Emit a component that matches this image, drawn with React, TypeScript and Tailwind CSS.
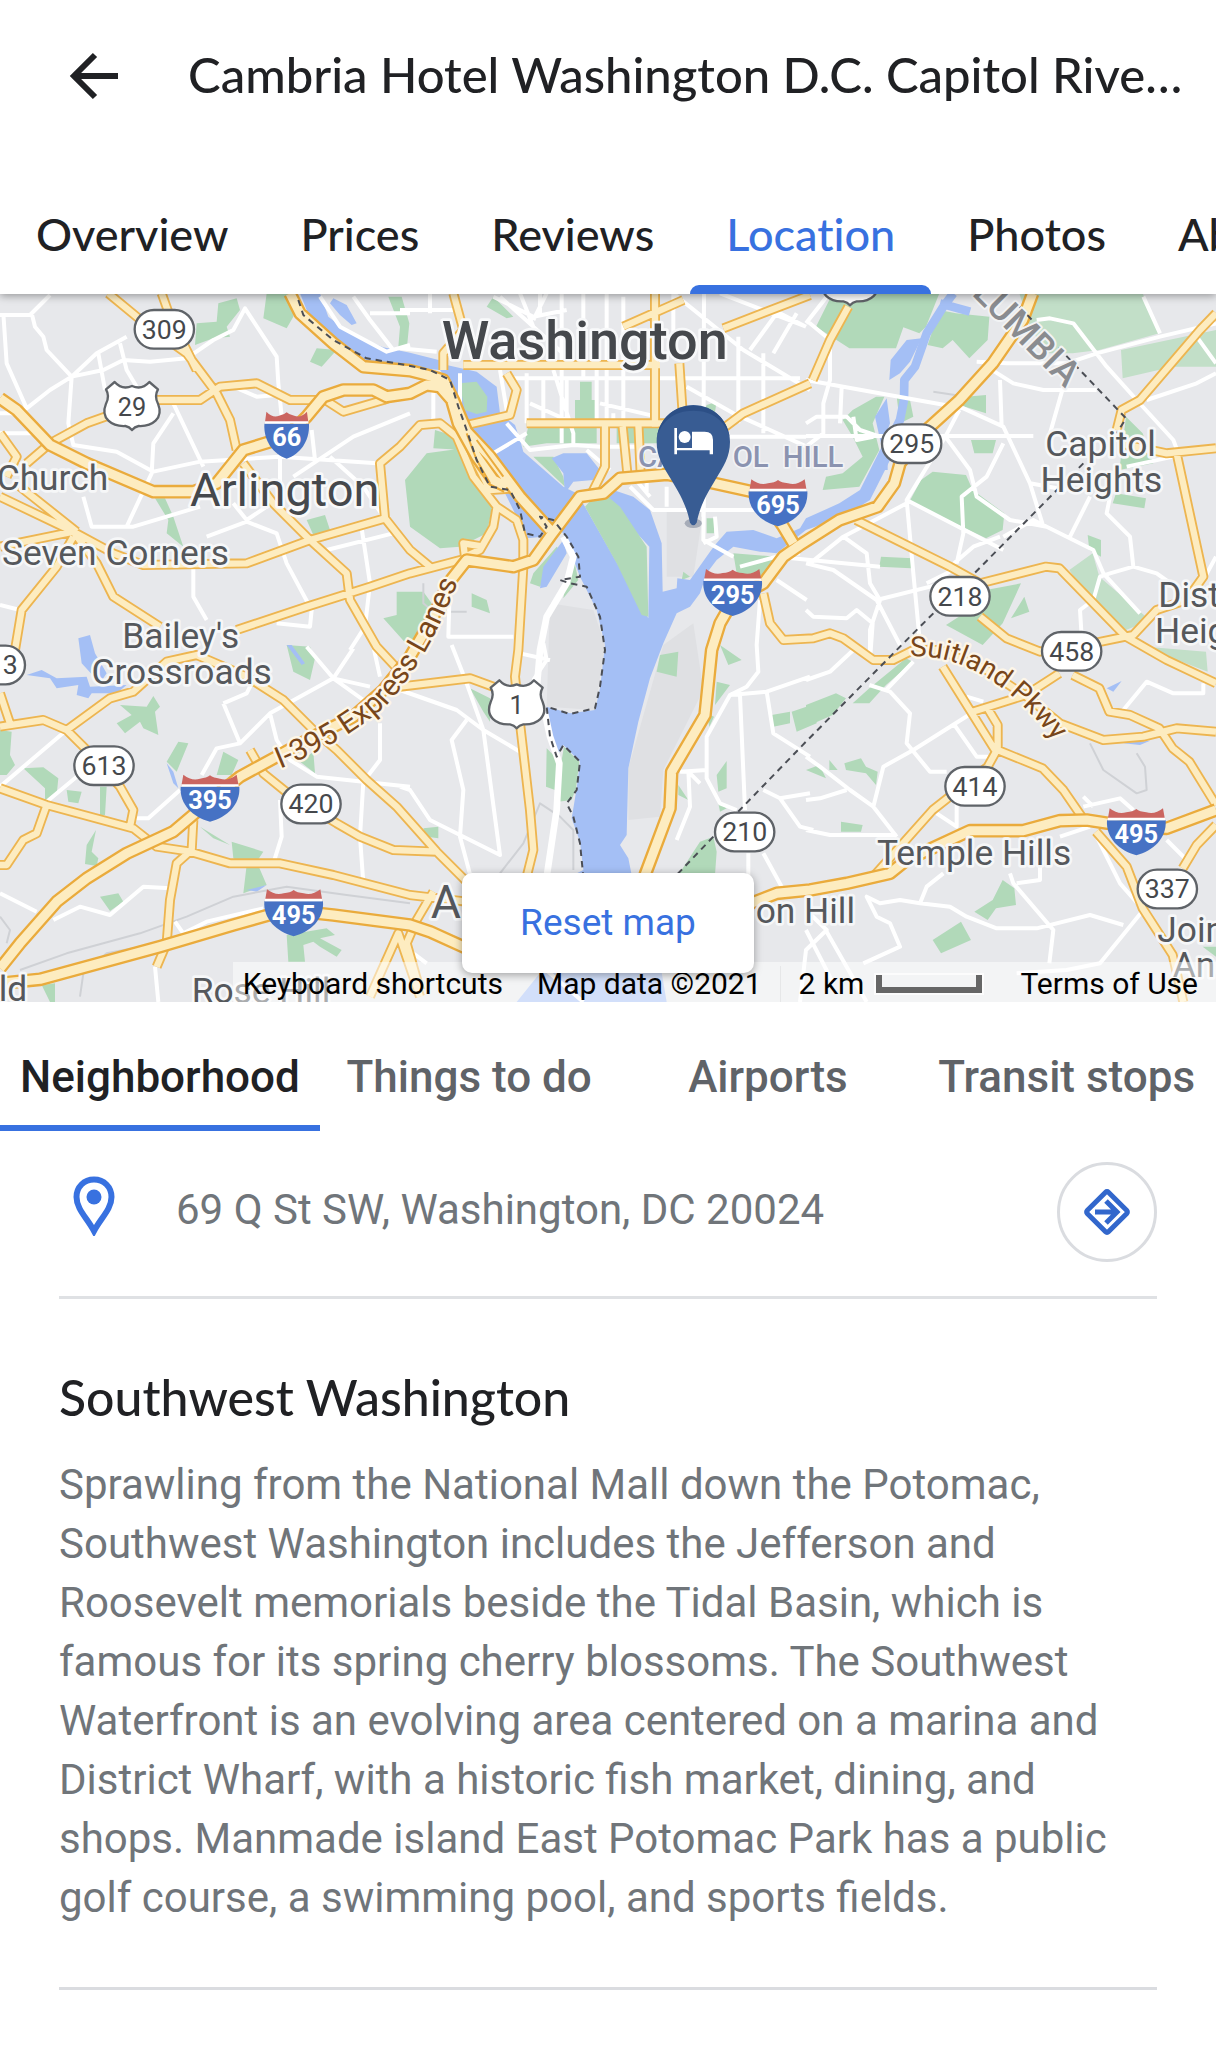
import React from "react";

const PARKS =
  "M1215,570 L1280,490 L1390,475 L1415,560 L1480,640 L1460,730 L1380,770 L1320,775 L1230,710Z " +
  "M1305,420 L1370,440 L1390,480 L1300,475Z M1585,410 H1790 V460 H1640 L1570,470Z M1850,410 H1980 V460 H1850Z " +
  "M1740,275 H1775 V330 H1788 V390 H1725 V330 H1740Z M1600,500 L1660,500 L1690,560 L1695,590Z M1165,20 H1205 L1228,100 L1220,180 L1195,170 L1200,110Z " +
  "M1460,50 L1480,20 L1540,80 L1520,85Z M590,100 L650,95 L655,40 L710,25 L720,60 L680,110 L690,140 L640,145 L585,165Z " +
  "M800,10 H880 V80 L860,115 L790,85Z M930,215 L950,175 L1010,180 L965,230Z M465,625 H495 L520,680 L550,770 L500,730 L505,690Z " +
  "M920,690 L975,675 L990,720 L940,735Z M1190,905 H1270 L1295,940 L1240,1085 L1150,985 L1190,975Z M1415,910 L1460,930 L1470,970 L1415,950Z " +
  "M1600,850 L1670,770 L1680,780 L1640,860 L1620,890 L1590,880Z M2498,10 H2818 L2778,110 L2758,130 L2710,112 L2688,175 H2548 L2448,110Z " +
  "M2818,60 L2868,70 L2968,80 L2963,150 L2908,205 L2858,150 L2828,175 L2783,165Z " +
  "M2558,360 L2628,320 L2653,320 L2618,400 L2638,480 L2578,590 L2468,600 L2478,560 L2528,550 L2588,500 L2558,440 L2528,390Z " +
  "M2690,320 L2730,330 L2740,380 L2700,400Z M2898,320 L2958,315 V370 L2878,345Z M2913,450 H2988 L2978,490 H2923Z " +
  "M2798,545 L2898,555 L2918,600 L3013,670 L3008,720 L2958,745 L2728,635 L2763,570Z M3378,380 L3428,430 L3460,520 L3358,540Z " +
  "M3348,610 L3438,625 L3433,655 L3338,640Z M2643,800 L2738,805 L2733,835 L2638,830Z M3263,735 L3303,750 V800 L3268,780Z " +
  "M2958,900 L3063,880 L3008,1000 L2948,1065 L2838,1005 L2908,960Z M3033,985 L3073,920 L3088,965Z " +
  "M2120,345 L2150,335 L2145,365 L2110,370Z M2120,685 H2142 V730 H2120Z M2200,790 L2330,800 L2290,860 L2210,850Z M2045,870 L2050,845 L2070,860Z " +
  "M0,1320 L35,1325 L30,1395 L45,1425 L20,1455 H0Z M70,1435 L130,1432 L175,1465 L170,1515 L135,1535 V1495Z " +
  "M200,1500 L245,1505 L235,1540 L205,1535Z M300,1490 H320 L315,1575 H300Z " +
  "M360,1245 L440,1250 L460,1218 L480,1250 L465,1265 L475,1335 L430,1315 L420,1295 L375,1330 L350,1300 L395,1275Z " +
  "M500,1415 L535,1355 L565,1360 L530,1445Z M650,1455 L670,1385 L715,1410 L695,1455Z M260,1665 L288,1620 L275,1685 L295,1705 L290,1728 L255,1722Z " +
  "M600,1610 L690,1665 L640,1645Z M695,1655 L790,1685 L770,1715 L800,1785 L730,1810 L740,1725 L700,1705Z M300,1820 L355,1810 L370,1835 L330,1863Z " +
  "M860,1935 L980,1915 L1005,1935 L960,1945 L1025,1980 L1010,2000 L960,1970 L940,1955 L910,1965 L915,2015 H865Z M125,2085 L165,2080 V2136 H150Z " +
  "M860,1065 L930,1070 L945,1105 L930,1170 L880,1145Z M900,1415 L940,1385 L945,1450Z " +
  "M1410,1195 L1470,1225 V1295 L1450,1265Z M1270,1615 L1315,1610 V1645 L1280,1640Z M1640,1375 L1680,1415 L1665,1500 L1638,1490Z " +
  "M1980,1095 L2035,1085 L2030,1160 L1970,1145Z M2160,1065 L2225,1110 L2185,1125Z M2150,1175 L2190,1185 L2145,1245Z M2150,1455 L2180,1413 V1495 L2155,1505Z " +
  "M2155,1540 L2180,1555 L2160,1565Z M2035,1755 L2100,1655 L2140,1640 L2150,1685 L2145,1755Z M2315,1275 L2370,1265 V1300 L2320,1310Z " +
  "M2375,1265 L2450,1240 V1300 L2390,1325Z M2035,1485 L2065,1530 L2035,1515Z M2120,1270 L2142,1280 L2128,1310Z " +
  "M2418,1245 L2508,1210 L2538,1225 L2498,1275 L2418,1310Z M2558,1240 L2608,1195 L2718,1105 L2738,1115 L2658,1185 L2608,1240Z " +
  "M2418,1440 L2458,1425 L2478,1465Z M2488,1410 L2513,1440 H2488Z M2533,1420 L2583,1405 L2598,1430 L2633,1445 L2628,1485 L2598,1450 L2538,1440Z " +
  "M2523,1595 L2588,1605 L2583,1625 H2523Z M2923,1865 L2978,1830 L3008,1770 L3043,1795 L3048,1845 L2988,1855 L2963,1890Z " +
  "M2798,1950 L2883,1895 L2913,1950 L2823,1990Z M3608,1970 H3648 V2000Z";
const PALE_PARKS =
  "M3058,10 H3428 L3478,130 L3298,180 L3218,190 L3138,190 L3090,110Z M3363,180 L3648,120 V230 H3518 L3368,265Z " +
  "M3208,840 L3278,790 L3298,860 L3438,980 L3428,1000 L3378,1020 L3268,930Z M3438,1070 L3618,1085 L3623,1145 L3518,1105Z";
const WATER =
  "M900,10 L960,10 L985,80 L1050,130 L1150,172 L1230,188 L1325,212 L1340,225 L1430,245 L1490,290 L1500,370 L1545,405 L1560,450 L1570,485 L1690,590 L1730,610 L1755,650 L1945,985 L1948,770 L1800,610 L1840,600 L1900,620 L1950,660 L1985,760 L1988,905 L2030,895 L2032,865 L2070,870 L2130,785 L2145,765 L2180,725 L2260,720 L2330,745 L2400,715 L2418,685 L2518,640 L2580,600 L2640,480 L2675,500 L2610,630 L2530,680 L2418,720 L2330,790 L2280,785 L2200,770 L2150,810 L2120,850 L2100,910 L2070,950 L2030,970 L1990,1060 L1950,1165 L1915,1295 L1885,1435 L1880,1635 L1860,1665 L1885,1705 L1895,1755 L1960,1900 L2000,2136 H1550 L1740,1900 L1720,1755 L1750,1740 L1740,1655 L1715,1585 L1730,1495 L1740,1415 L1690,1365 L1670,1400 L1645,1335 L1640,1250 L1710,1270 L1785,1260 L1800,1195 L1815,1065 L1790,960 L1740,860 L1690,730 L1640,690 L1630,740 L1580,745 L1560,700 L1500,580 L1430,430 L1380,380 L1355,290 L1320,240 L1230,232 L1080,208 L1000,168 L940,110Z " +
  "M1655,505 L1690,490 L1760,490 L1800,540 L1780,570 L1720,575 L1695,610 L1690,550Z M1690,750 L1700,790 L1640,890 L1620,895 L1630,830Z " +
  "M1000,25 L1040,45 L1070,100 L1055,105 L1020,75 L990,40Z M2668,270 L2672,210 L2720,150 L2765,145 L2730,215 L2700,250Z M2625,380 L2660,325 L2670,400 L2645,470Z " +
  "M235,1045 L270,1035 L285,1090 L320,1150 L300,1180 L245,1120Z M80,1155 L125,1140 L170,1165 L260,1160 L270,1190 L380,1185 L350,1210 H275 L265,1225 L230,1215 L235,1185 L170,1195 L150,1165Z " +
  "M500,1420 L520,1445 L535,1495 L520,1480Z M860,1065 H875 L915,1120 L905,1125Z M3320,1195 L3365,1173 L3340,1205Z M3370,1360 L3450,1352 L3420,1365Z M740,1800 L800,1785 L770,1805Z";
const ISLANDS =
  "M1378,280 L1430,275 L1462,320 L1460,365 L1430,372 L1395,360Z M1755,650 L1800,600 L1860,650 L1940,770 L1945,980 L1925,975 L1850,820Z M1692,1370 L1738,1415 L1728,1495 L1715,1530 L1675,1535 L1685,1410Z M1720,800 L1735,870 L1690,925 L1700,860Z";
const STREAM = "M2650,540 L2650,490 L2700,390 L2712,330 L2713,270 L2745,230 L2780,130 L2830,50 L2860,10 M2820,40 L2910,65";

const HIGHWAYS =
  "M0,325 L50,360 L150,465 L260,520 L460,605 L580,605 L650,580 L690,530 L730,480 L860,440 L920,380 L970,320 L1030,300 L1120,300 L1160,320 L1230,310 L1280,285 L1320,290 L1355,330 L1375,400 L1430,500 L1480,570 L1520,590 M870,10 L900,70 L1000,160 L1090,230 L1230,242 L1280,255 L1330,270 L1360,330 L1400,425 L1470,500 L1560,620 L1650,720 " +
  "M0,2035 L60,1960 L170,1835 L260,1765 L380,1690 L520,1625 L620,1540 L720,1460 L830,1400 L940,1340 L1060,1280 L1150,1200 L1230,1100 L1300,980 L1345,880 L1400,810 L1540,830 L1600,810 L1650,740 L1740,620 L1810,610 L1860,565 L2000,553 L2120,575 L2280,610 L2350,710 L2380,760 " +
  "M3098,10 L3068,90 L2978,220 L2878,330 L2768,430 L2700,520 L2683,580 L2633,650 L2518,690 L2400,765 L2350,800 L2290,880 L2200,930 L2160,1000 L2135,1080 L2115,1275 L2015,1445 L2010,1555 L1935,1755 L1850,1950 " +
  "M0,2080 L120,2068 L480,1970 L700,1905 L860,1860 L1000,1875 L1230,1905 L1290,1925 L1400,1975 M2240,1845 L2330,1810 L2430,1800 L2540,1780 L2670,1750 L2720,1710 L2910,1622 L3070,1622 L3180,1592 L3260,1590 L3390,1610 L3500,1615 L3648,1560";
const ARTERIALS =
  "M80,520 L150,460 L260,400 L330,375 L470,330 L600,330 L660,290 L770,280 L870,330 L950,330 M325,10 L440,105 L560,190 L650,310 L690,390 L710,480 M485,10 L510,80 L590,240 M960,320 L1030,365 L1150,330 L1200,310 " +
  "M730,520 L820,640 L930,750 L1040,850 L1050,930 L1130,1070 L1200,1145 M0,770 L220,725 L340,790 L430,825 L740,820 L930,750 L1155,685 L1140,520 L1200,470 L1260,405 L1320,400 L1370,440 L1420,560 L1490,650 L1550,690 L1570,750 L1570,830 L1555,1080 L1545,1160 L1560,1300 L1590,1560 L1600,1680 L1580,1760 L1540,1990 " +
  "M0,620 L220,725 L290,820 L340,920 L480,1010 M0,430 L50,500 L20,560 M60,590 L230,725 M45,1080 L65,960 L170,830 L220,740 M710,1020 L920,950 L1110,890 L1230,850 L1400,805 M1155,685 L1230,780 L1290,830 M1490,650 L1480,710 L1440,780 L1395,800 L1390,760 L1450,770 " +
  "M1400,430 L1430,520 L1470,600 L1545,595 " +
  "M0,1310 L130,1290 L200,1320 L330,1225 L400,1205 L500,1115 L590,1095 L740,1160 L850,1230 L940,1320 L1010,1380 L1100,1470 L1190,1550 L1310,1685 L1400,1775 M200,1320 L270,1390 L360,1490 L400,1560 L390,1610 M0,1210 L30,1300 " +
  "M0,1495 L140,1545 L400,1615 L470,1670 L570,1685 L690,1720 L840,1720 L1000,1755 L1230,1815 L1400,1835 M140,1545 L110,1630 L70,1650 L20,1725 H0 M580,1590 L575,1680 L530,1720 L510,1830 L500,1960 L470,2030 " +
  "M750,1380 L790,1450 L870,1515 L1010,1600 L1080,1640 L1180,1680 L1310,1685 M1110,2120 L1195,1930 L1260,2120 M1200,1190 L1410,1165 L1480,1190 M1300,1805 L1250,1890 L1220,1960 L1260,2100 " +
  "M1360,10 L1390,120 L1330,190 L1330,240 M1390,225 H1980 M1965,10 V410 M1580,400 H2040 M1520,250 L1550,300 L1530,375 L1400,405 M1815,400 V530 L1770,620 M1868,410 L1882,550 M1915,400 L1922,550 M2038,220 L2050,400 M1870,110 L2050,30 M2170,115 L2430,15 M2150,430 L2230,370 L2430,280 M2438,270 L2490,150 L2545,50 " +
  "M2568,690 L2850,830 L2940,880 L3138,830 L3178,835 L3378,1040 L3500,1110 L3648,1180 M2940,980 L3020,1045 L3120,1085 L3278,1060 L3400,1035 L3470,960 L3560,930 L3610,860 L3530,490 M3350,420 L3365,360 L3420,330 L3600,120 L3648,70 M3360,460 L3500,490 L3648,475 " +
  "M2290,910 L2310,1000 L2350,1050 L2440,1045 L2490,1030 L2530,1045 L2620,1110 L2680,1110 L2740,1080 L2820,1080 L2960,1140 L3080,1220 L3180,1300 L3310,1350 L3430,1340 L3530,1315 L3648,1325 " +
  "M2828,1130 L2988,1385 L2963,1430 L2798,1560 L2620,1760 M2918,1265 L3078,1215 L3178,1150 M2963,1255 L2993,1305 V1380 L3128,1435 L3190,1500 L3245,1580 M3288,1625 L3380,1730 L3428,1855 L3518,1995 L3550,2136 M3218,1155 L3298,1195 L3328,1265 L3390,1275 L3478,1315 L3518,1375 L3568,1415 L3648,1545 M3648,1605 L3590,1665 L3548,1735";
const STREETS =
  "M0,75 H90 L150,15 M95,70 L105,110 L130,140 L140,180 L215,260 L290,190 L380,140 M10,70 L20,220 L80,355 L150,300 L215,260 L310,240 L370,210 L450,215 L560,205 L640,150 L700,120 L735,55 L830,200 L835,280 L845,380 M215,260 L205,400 L220,465 L350,485 L460,545 L600,515 L840,500 L1130,520 M295,190 L315,300 M360,160 L380,240 L410,290 M520,340 L610,530 M520,370 L460,460 L455,550 L380,710 M250,620 L275,710 L400,710 L600,650 M620,740 L740,695 L830,730 L860,820 L935,960 L930,1010 L830,1000 M700,290 L770,320 L830,315 M0,430 H110 M0,370 H40 M840,450 V610 M935,420 L945,510 M880,560 L1060,440 L1230,370 M990,500 L1090,590 L1150,680 M980,780 L1200,725 M1085,715 L1110,880 L1095,1010 L1050,1080 M740,690 L700,640 M740,690 L830,630 M580,830 V920 L620,990 M0,945 L60,960 M960,20 L1020,110 L1160,185 L1230,165 M1060,20 L1110,90 L1180,180 M1110,70 H1230 " +
  "M0,1490 L200,1320 M140,1535 L230,1460 M400,1585 H445 L540,1500 M670,1240 L720,1360 L650,1375 L605,1455 M670,1240 L740,1210 L760,1170 M720,1360 L810,1270 L1000,1165 L1060,1075 M810,1270 L830,1350 L870,1410 L950,1460 L1090,1475 L1230,1490 M920,1070 L1000,1165 L1110,1190 M1000,1165 L1090,1230 L1130,1220 M1140,1300 V1410 L1090,1475 L1080,1640 L1090,1780 M840,1530 L845,1640 L820,1720 M0,1810 L110,1865 M160,1890 L240,1850 L330,1875 L430,1790 L510,1795 M525,1895 L550,1930 L620,1895 L790,1855 M465,2030 L475,2136 M1120,1070 L1140,1160 " +
  "M1200,1200 L1370,1260 L1450,1320 L1560,1385 M1355,1065 L1400,1180 L1450,1320 L1500,1695 L1290,1590 L1230,1500 L1200,1490 M1400,1290 L1355,1350 L1390,1500 L1380,1640 L1420,1790 M1350,870 L1345,1040 H1540 M1630,1060 L1640,1110 L1600,1170 M1560,1090 L1650,1110 " +
  "M1200,60 H1360 M1290,10 V70 M1200,175 L1310,185 M1480,20 L1600,80 L1700,60 M1640,10 L1600,90 M1500,20 L1700,200 M1560,10 L1600,110 M1620,10 V80 M1685,10 V460 M1750,10 V270 M1820,10 V400 M1870,20 V400 M2112,10 L2110,680 M2020,10 V160 M2020,10 L2230,180 L2430,300 M2160,10 L2418,110 M2320,60 L2340,70 L2418,110 M2330,70 L2250,180 M2390,70 L2320,190 M2215,140 V400 M2290,190 V430 M2060,290 L2200,370 L2420,470 M1540,265 H2400 M2190,440 H2418 M1300,250 L1300,400 M1380,250 V410 M1500,240 L1510,300 L1520,360 M1580,250 V400 M1630,270 V390 M1660,240 L1720,430 L1720,470 M1700,270 V390 M1790,210 V400 M1840,370 V400 M1590,340 L1700,390 M1800,340 L1970,380 M1520,400 L1590,480 L1720,465 L1800,470 L1960,470 M1480,490 L1580,430 M1760,480 L1830,540 M1890,590 L1960,660 H2400 M1900,560 L1950,620 M2000,590 V650 M1940,540 V610 M2112,600 L2110,750 L2200,800 M2145,680 L2150,740 L2110,760 M2220,830 L2330,800 L2400,790 M2330,870 L2420,930 M2280,930 L2270,1065 L2275,1145 L2240,1190 L2190,1215 L2120,1340 L2120,1465 L2160,1540 L2210,1560 M2330,800 L2640,830 " +
  "M2100,1480 L2065,1445 M2040,1445 L2120,1440 M2065,1440 L2070,1550 L2030,1650 M2220,1215 L2235,1560 M2190,1215 L2300,1205 L2430,1160 M2300,1205 L2320,1330 L2430,1400 M2290,1500 L2340,1525 L2430,1510 M2340,1525 L2400,1610 L2440,1620 M2245,1690 V1760 M2290,1690 L2345,1790 " +
  "M2418,270 L2530,290 L2780,335 L2890,355 L3010,410 L3090,580 L3130,710 M2480,20 L2418,100 M2418,90 L2490,150 V270 L2470,340 V430 L2418,470 M2418,438 H3100 M2525,290 L2520,400 M2418,400 L2450,380 H2540 L2580,420 L2640,440 M2560,380 L2570,450 L2620,440 M2878,360 L2836,440 L2720,630 L2740,850 L2760,1060 M2836,440 L2910,540 L2930,620 L3030,690 L3140,710 L3280,780 L3310,850 L3420,970 M2720,630 L3010,780 M2720,640 L2530,740 L2430,820 M2530,740 L2600,790 L2610,880 L2640,930 L2610,1020 L2610,1110 M2418,820 L2500,840 L2630,930 L2830,880 M2630,930 L2700,1065 M2870,820 L2890,730 L2885,620 L2960,560 L3010,460 M3010,740 L3100,690 L3140,710 M2860,840 L2780,880 M2850,830 L2920,770 L3000,740 M2960,230 L3040,280 L3130,300 H3290 M3000,270 L3005,410 M2930,215 L3020,220 H3200 L3290,190 L3480,140 L3648,100 M3110,90 L3150,85 L3220,100 L3320,230 L3410,330 L3520,450 L3535,490 M3190,290 L3150,430 M3430,20 L3480,130 M3590,140 L3648,220 M3440,330 L3590,280 L3648,250 M3380,530 L3520,500 M3090,580 L3200,600 M3270,620 L3210,740 M3330,620 L3320,670 L3390,740 L3400,830 L3330,850 L3300,860 L3280,930 L3240,960 L3245,1040 M3400,830 L3470,850 L3540,900 M3610,870 L3648,800 M2418,960 L2440,980 L2540,985 L2570,960 L2618,1000 L2610,1110 " +
  "M2418,1170 L2490,1145 L2560,1080 M2608,1185 L2670,1205 L2730,1270 L2720,1360 L2790,1445 H2840 M2740,1115 L2658,1200 M2930,1260 L2740,1380 L2650,1430 L2635,1490 L2620,1550 M2860,1300 L2930,1400 H2970 M2418,1400 L2460,1430 L2550,1500 L2620,1550 L2690,1640 M2418,1620 L2490,1635 H2690 M2418,1530 L2460,1525 L2540,1500 M2870,1540 V1610 L2810,1570 M2900,1220 L2950,1235 M3370,1260 L3440,1175 L3520,1210 H3610 V1180 M3250,1550 L3360,1525 L3400,1560 M3250,1520 L3280,1550 M3290,1640 L3360,1780 L3430,1860 L3300,2020 L3200,2040 L3050,2050 M3030,1750 L3040,1780 L3160,1920 L3148,2020 M3120,1690 L3120,1770 L3050,1780 M3270,1610 L3180,1640 M2830,1750 L2780,1790 L2760,1840 L2700,1830 L2640,1840 L2600,1820 L2630,1880 L2670,1900 L2700,1970 L2590,2020 M2760,1840 L2850,1850 L2900,1880 L2990,1915 L3110,1915 L3270,1875 L3370,1905 M2480,1925 L2600,2136 M2400,2136 L2418,1980 L2480,1920 L2418,1860 M2418,1920 L2500,2080 M3500,1650 L3560,1710 M1750,2136 L1580,1990 M1280,2020 L1200,1960";
const BRIDGES = "M1690,740 L1720,800 L1700,880 L1640,980 L1620,1080 L1610,1200 M1635,1270 L1650,1340 L1678,1420 L1670,1560 L1640,1760";
const RAIL =
  "M60,2040 L200,1990 L420,1930 L560,1880 L700,1820 L860,1790 L1040,1815 L1230,1840 M240,2120 L250,2050 L320,1990 L480,1960 M1270,880 L1270,940 L1300,965 H1400 M1500,1750 L1570,1660 L1620,1540 L1680,1580 L1720,1620 V1740 M3270,1360 L3310,1440 L3410,1510 L3440,1500 L3435,1430 L3410,1390 M2800,305 L2900,320 M0,1880 L30,1920 L20,1960";
const BORDERS =
  "M895,30 L910,75 L1000,150 L1100,205 L1200,222 L1290,240 L1350,270 L1375,350 L1400,420 L1430,510 L1470,590 L1530,600 L1560,660 L1575,730 L1620,740 L1640,710 L1620,680 L1660,690 L1700,740 L1735,800 L1740,860 L1680,870 L1710,880 L1760,890 L1800,980 L1815,1080 L1800,1190 L1785,1255 L1710,1272 L1640,1250 L1650,1340 L1670,1400 L1690,1365 L1740,1415 L1730,1500 L1700,1540 L1720,1580 L1740,1660 L1750,1760 " +
  "M3058,50 L3378,385 L3350,430 M3250,520 L2918,855 M2800,970 L2690,1080 L2418,1355 L2200,1580 M2140,1640 L2030,1755";

function Route({ x, y, children }: { x: number; y: number; children: string }) {
  return (
    <g>
      <rect x={x - 89} y={y - 58} width="178" height="116" rx="58" fill="#fff" stroke="#5f6368" strokeWidth="7" />
      <text x={x} y={y + 28} textAnchor="middle" fontSize="80" fill="#45484c">{children}</text>
    </g>
  );
}

function UsRoute({ x, y, children }: { x: number; y: number; children?: string }) {
  return (
    <g>
      <path
        transform={`translate(${x} ${y})`}
        d="M0,-58 Q-30,-45 -52,-70 L-78,-48 Q-66,-28 -78,-5 C-96,40 -60,64 -20,62 Q-8,64 0,74 Q8,64 20,62 C60,64 96,40 78,-5 Q66,-28 78,-48 L52,-70 Q30,-45 0,-58Z"
        fill="#fff"
        stroke="#5f6368"
        strokeWidth="7"
      />
      {children && <text x={x} y={y + 32} textAnchor="middle" fontSize="76" fill="#45484c">{children}</text>}
    </g>
  );
}

function Interstate({ x, y, narrow, children }: { x: number; y: number; narrow?: boolean; children: string }) {
  return (
    <g>
      <g transform={`translate(${x} ${y}) scale(${narrow ? 0.76 : 1} 1)`}>
        <path d="M-80,-70 Q-55,-50 -30,-58 Q-10,-60 0,-68 Q10,-60 30,-58 Q55,-50 80,-70 L86,-36 H-86Z" fill="#cb6560" />
        <path d="M-88,-34 H88 C92,20 50,58 0,71 C-50,58 -92,20 -88,-34Z" fill="#4672c4" />
        <path d="M-86,-38 H86" stroke="#fff" strokeWidth="7" />
      </g>
      <text x={x} y={y + 34} textAnchor="middle" fontSize="76" fontWeight="700" fill="#fff">{children}</text>
    </g>
  );
}

function Place({ x, y, size = 106, middle, children }: { x: number; y: number; size?: number; middle?: boolean; children: string }) {
  return (
    <text x={x} y={y} fontSize={size} textAnchor={middle ? "middle" : "start"} fill="#55585c" stroke="#f6f7f8" strokeWidth="16" paintOrder="stroke">
      {children}
    </text>
  );
}

function CityMap() {
  return (
    <svg
      viewBox="0 12 3648 2124"
      preserveAspectRatio="xMidYMid slice"
      className="block h-full w-full"
      fontFamily="Roboto, sans-serif"
      strokeLinejoin="round"
      role="img"
      aria-label="Map of Washington and Arlington"
    >
      <rect y="0" width="3648" height="2140" fill="#e7e8eb" />
      <path d="M1650,940 L1780,960 L1815,1065 L1785,1260 L1640,1250Z M1990,1065 L2080,1000 L2110,1200 L1990,1440 L1980,1580 L1885,1590 L1885,1435Z M2000,660 H2110 L2080,860 H2000Z" fill="#dfe0e3" />
      <path d={PARKS} fill="#b1d9b9" />
      <path d={PALE_PARKS} fill="#c2dfc8" />
      <path d={WATER} fill="#a4bff5" />
      <path d={STREAM} fill="none" stroke="#a4bff5" strokeWidth="26" />
      <path d={ISLANDS} fill="#b1d9b9" />
      <g fill="none">
        <path d={RAIL} stroke="#cfd1d5" strokeWidth="6" />
        <path d={STREETS} stroke="#fff" strokeWidth="12" />
        <path d={BRIDGES} stroke="#fff" strokeWidth="20" />
        <path d={ARTERIALS} stroke="#edb550" strokeWidth="30" />
        <path d={ARTERIALS} stroke="#fdecc0" strokeWidth="19" />
        <path d={HIGHWAYS} stroke="#eaab3c" strokeWidth="41" />
        <path d={HIGHWAYS} stroke="#fdecc0" strokeWidth="27" />
        <path d="M1400,430 L1430,510 L1470,580 M1430,450 L1510,560" stroke="#eaab3c" strokeWidth="6" />
        <path d={BORDERS} stroke="#4b4e55" strokeWidth="6" strokeDasharray="19 15" />
      </g>

      <g strokeLinejoin="round">
        <text x="1325" y="208" fontSize="162" fontWeight="500" fill="#45484c" stroke="#f8f9fa" strokeWidth="16" paintOrder="stroke">Washington</text>
        <text x="570" y="647" fontSize="141" fill="#45484c" stroke="#f8f9fa" strokeWidth="16" paintOrder="stroke">Arlington</text>
        <Place x={-10} y={600}>Church</Place>
        <Place x={6} y={825}>Seven Corners</Place>
        <Place x={542} y={1075} middle>Bailey's</Place>
        <Place x={545} y={1182} middle>Crossroads</Place>
        <Place x={3302} y={499} middle>Capitol</Place>
        <Place x={3304} y={605} middle>Heights</Place>
        <Place x={3475} y={952}>District</Place>
        <Place x={3465} y={1060}>Heights</Place>
        <Place x={2922} y={1725} middle>Temple Hills</Place>
        <Place x={2267} y={1900}>on Hill</Place>
        <Place x={3472} y={1957}>Joint Base</Place>
        <Place x={3518} y={2060}>Andrews</Place>
        <Place x={-4} y={2134}>ld</Place>
        <Place x={575} y={2138}>Rose Hill</Place>
        <Place x={1292} y={1885} size={139}>A</Place>
        <g fontSize="88" fontWeight="500" fill="#8b93b0" stroke="#f2f3f6" strokeWidth="10" paintOrder="stroke">
          <text x="1914" y="530">CA</text>
          <text x="2198" y="530">OL</text>
          <text x="2348" y="530">HILL</text>
        </g>

        <path id="express" d="M840,1436 Q1040,1355 1165,1240 Q1290,1100 1380,860" fill="none" />
        <text fontSize="90" fill="#78461a" stroke="#fdf6e8" strokeWidth="14" paintOrder="stroke"><textPath href="#express">I-395 Express Lanes</textPath></text>
        <path id="suitland" d="M2730,1100 C2880,1090 3040,1180 3200,1400" fill="none" />
        <text fontSize="84" fill="#78461a" stroke="#fdf6e8" strokeWidth="14" paintOrder="stroke"><textPath href="#suitland">Suitland Pkwy</textPath></text>
        <path id="district" d="M2860,-40 L3260,360" fill="none" />
        <text fontSize="110" fontWeight="500" fill="#8a8c90" stroke="#f2f3f4" strokeWidth="12" paintOrder="stroke"><textPath href="#district">OLUMBIA</textPath></text>
      </g>

      <Route x={493} y={118}>309</Route>
      <Route x={2735} y={461}>295</Route>
      <Route x={2880} y={919}>218</Route>
      <Route x={3215} y={1084}>458</Route>
      <Route x={312} y={1427}>613</Route>
      <Route x={933} y={1542}>420</Route>
      <Route x={2234} y={1626}>210</Route>
      <Route x={2925} y={1489}>414</Route>
      <Route x={3502} y={1797}>337</Route>
      <rect x="-103" y="1067" width="178" height="116" rx="58" fill="#fff" stroke="#5f6368" strokeWidth="7" />
      <text x="8" y="1152" fontSize="80" fill="#45484c">3</text>
      <UsRoute x={396} y={346}>29</UsRoute>
      <UsRoute x={1550} y={1241}>1</UsRoute>
      <UsRoute x={2550} y={-28} />
      <Interstate x={860} y={435} narrow>66</Interstate>
      <Interstate x={2334} y={638}>695</Interstate>
      <Interstate x={2198} y={907}>295</Interstate>
      <Interstate x={630} y={1524}>395</Interstate>
      <Interstate x={881} y={1868}>495</Interstate>
      <Interstate x={3409} y={1625}>495</Interstate>

      <ellipse cx="2080" cy="700" rx="26" ry="14" fill="#3c4a66" opacity="0.35" />
      <path d="M2080,345 C2019,345 1970,394 1970,455 C1970,500 1990,530 2012,566 C2045,620 2060,650 2070,698 Q2080,714 2090,698 C2100,650 2115,620 2148,566 C2170,530 2190,500 2190,455 C2190,394 2141,345 2080,345Z" fill="#385c93" />
      <path d="M1971,440 C1980,385 2020,347 2080,347 C2140,347 2180,385 2189,440 C2175,395 2140,362 2080,362 C2020,362 1985,395 1971,440Z" fill="#2c4f86" />
      <g transform="translate(2080 454)" fill="#fff">
        <path d="M-57,-40 H-49 V20 H-4 V-29 H34 Q59,-29 59,-5 V39 H49 V27 H-49 V39 H-57Z" />
        <circle cx="-26" cy="-13" r="18" />
      </g>
    </svg>
  );
}

const TABS = ["Overview", "Prices", "Reviews", "Location", "Photos", "About"];
const AREAS = ["Things to do", "Airports", "Transit stops"];

export default function App() {
  return (
    <div className="min-h-screen overflow-x-hidden bg-white font-[Roboto,sans-serif] text-[#202124]">
      <header className="relative z-10 bg-white font-[Lato,sans-serif] font-medium shadow-[0_2px_8px_rgba(0,0,0,0.35)] [font-variant-ligatures:none]">
        <div className="flex h-[152px] items-center pr-5 pl-16">
          <button aria-label="Back" className="mr-16 shrink-0">
            <svg viewBox="0 0 60 60" className="h-[60px] w-[60px]" fill="none" stroke="#202124" strokeWidth="6">
              <path d="M54,30 H12 M31,9 L10,30 L31,51" />
            </svg>
          </button>
          <h1 className="truncate pb-1 text-[49px] leading-[64px]">Cambria Hotel Washington D.C. Capitol Riverfront</h1>
        </div>
        <nav className="flex h-[142px] overflow-hidden" aria-label="Hotel sections">
          {TABS.map((tab) => (
            <a
              key={tab}
              href={"#" + tab.toLowerCase()}
              aria-current={tab === "Location" ? "page" : undefined}
              className={"relative shrink-0 px-9 pt-[54px] text-[45px] leading-[56px] " + (tab === "Location" ? "text-[#3871e0]" : "")}
            >
              {tab}
              {tab === "Location" && <span className="absolute inset-x-0 bottom-0 h-[9px] rounded-t-[9px] bg-[#3871e0]" />}
            </a>
          ))}
        </nav>
      </header>

      <section className="relative h-[708px] overflow-hidden bg-[#e7e8eb]" aria-label="Map">
        <CityMap />
        <div className="absolute right-0 bottom-0 flex h-10 items-center bg-white/50 pt-1 text-[30px] leading-9 text-black">
          <button className="pr-4 pl-[10px]">Keyboard shortcuts</button>
          <span className="px-[18px]">Map data ©2021</span>
          <span className="flex items-center gap-3 border-l border-black/5 pr-5 pl-[18px]">
            2 km
            <span className="h-[18px] w-[106px] border-x-[6px] border-b-[6px] border-[#666] outline-2 outline-white/70" />
          </span>
          <a href="#terms" className="px-[18px]">Terms of Use</a>
        </div>
        <button className="absolute bottom-[29px] left-1/2 h-[100px] w-[292px] -translate-x-[146px] rounded-[10px] bg-white text-[37px] text-[#3871e0] shadow-[0_2px_8px_rgba(0,0,0,0.35)]">
          Reset map
        </button>
      </section>

      <nav className="flex h-[129px] text-[44px] leading-[56px] font-medium" aria-label="Location details">
        <a href="#neighborhood" aria-current="true" className="border-b-[6px] border-[#3871e0] px-5 pt-[47px]">Neighborhood</a>
        {AREAS.map((area) => (
          <a key={area} href={"#" + area.toLowerCase().replaceAll(" ", "-")} className="flex-1 pt-[47px] text-center whitespace-nowrap text-[#5f6368]">{area}</a>
        ))}
      </nav>

      <main className="px-[59px]">
        <div className="flex h-[168px] items-center border-b-[3px] border-[#dfe1e4] pb-1">
          <svg viewBox="0 0 42 60" className="mb-3 ml-[14px] h-[60px] w-[42px]">
            <path d="M21,3.5 C11,3.5 3.5,11 3.5,21 C3.5,33 14,42 21,55 C28,42 38.5,33 38.5,21 C38.5,11 31,3.5 21,3.5Z" fill="none" stroke="#3871e0" strokeWidth="6" />
            <circle cx="21" cy="21" r="7.5" fill="#3871e0" />
          </svg>
          <address className="mb-1 ml-[61px] flex-1 text-[42px] leading-[56px] text-[#70757a] not-italic">69 Q St SW, Washington, DC 20024</address>
          <button aria-label="Directions" className="flex h-[100px] w-[100px] items-center justify-center rounded-full border-[3px] border-[#dadce0]">
            <svg viewBox="0 0 52 52" className="h-[52px] w-[52px]" fill="none" stroke="#3267cc" strokeWidth="5">
              <rect x="11" y="11" width="30" height="30" rx="2" transform="rotate(45 26 26)" />
              <path d="M14,26 H36 M25,15 L36,26 L25,37" />
            </svg>
          </button>
        </div>

        <article className="border-b-[3px] border-[#dadce0] pt-[66px] pb-[60px]">
          <h2 className="font-[Lato,sans-serif] text-[50px] leading-[64px] font-medium">Southwest Washington</h2>
          <p className="mt-[26px] text-[42px] leading-[59px] text-[#70757a]">
            Sprawling from the National Mall down the Potomac, Southwest Washington includes the Jefferson and Roosevelt
            memorials beside the Tidal Basin, which is famous for its spring cherry blossoms. The Southwest Waterfront is
            an evolving area centered on a marina and District Wharf, with a historic fish market, dining, and shops.
            Manmade island East Potomac Park has a public golf course, a swimming pool, and sports fields.
          </p>
        </article>
      </main>
    </div>
  );
}
